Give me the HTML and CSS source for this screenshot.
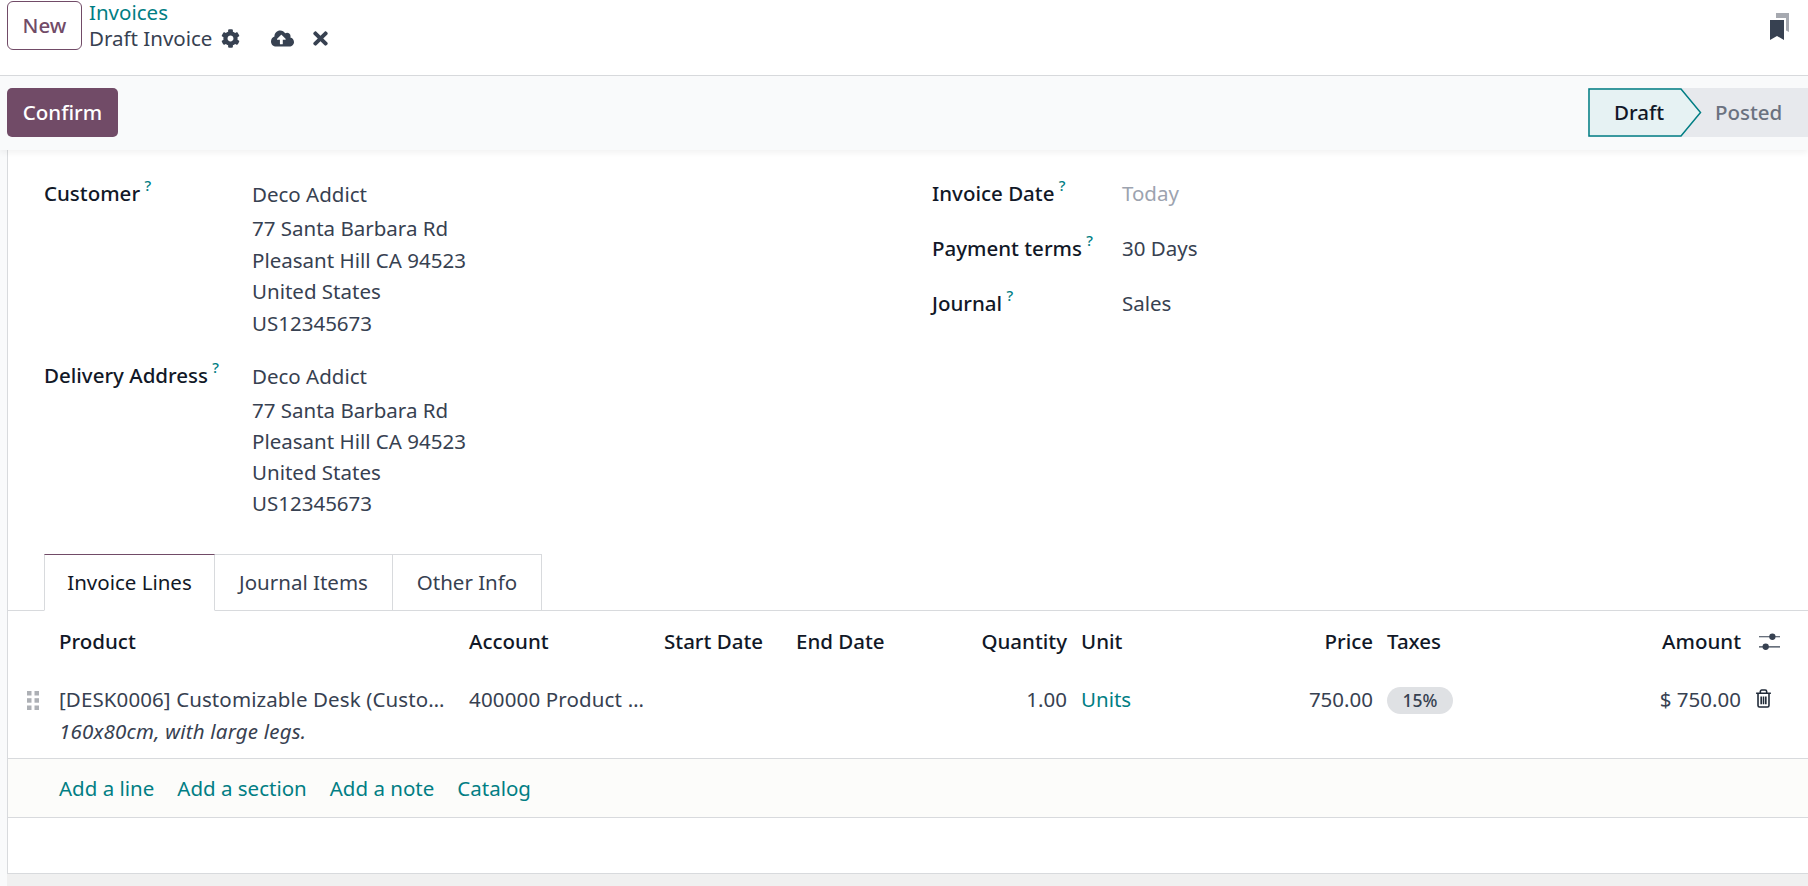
FILE: index.html
```html
<!DOCTYPE html>
<html lang="en">
<head>
<meta charset="utf-8">
<title>Draft Invoice</title>
<link rel="stylesheet" href="styles.css">
</head>
<body>
<header class="topbar">
  <button class="btn-new">New</button>
  <div class="crumbs">
    <a class="crumb-link">Invoices</a>
    <div class="crumb-current">
      <span class="crumb-title">Draft Invoice</span>
      <svg class="ic-gear" viewBox="0 0 512 512"><path d="M487.4 315.7l-42.6-24.6c4.3-23.2 4.3-47 0-70.2l42.6-24.6c4.9-2.8 7.1-8.6 5.5-14-11.1-35.6-30-67.8-54.7-94.6-3.8-4.1-10-5.1-14.8-2.3L380.8 110c-17.9-15.4-38.5-27.3-60.8-35.1V25.8c0-5.6-3.9-10.5-9.4-11.7-36.7-8.2-74.3-7.8-109.2 0-5.5 1.2-9.4 6.1-9.4 11.7V75c-22.2 7.9-42.8 19.8-60.8 35.1L88.7 85.5c-4.9-2.8-11-1.9-14.8 2.3-24.7 26.7-43.6 58.9-54.7 94.6-1.7 5.4.6 11.2 5.5 14L67.3 221c-4.3 23.2-4.3 47 0 70.2l-42.6 24.6c-4.9 2.8-7.1 8.6-5.5 14 11.1 35.6 30 67.8 54.7 94.6 3.8 4.1 10 5.1 14.8 2.3l42.6-24.6c17.9 15.4 38.5 27.3 60.8 35.1v49.2c0 5.6 3.9 10.5 9.4 11.7 36.7 8.2 74.3 7.8 109.2 0 5.5-1.2 9.4-6.1 9.4-11.7v-49.2c22.2-7.9 42.8-19.8 60.8-35.1l42.6 24.6c4.9 2.8 11 1.9 14.8-2.3 24.7-26.7 43.6-58.9 54.7-94.6 1.5-5.5-.7-11.3-5.6-14.1zM256 336c-44.1 0-80-35.9-80-80s35.9-80 80-80 80 35.9 80 80-35.9 80-80 80z"/></svg>
      <svg class="ic-cloud" viewBox="0 0 640 512"><path d="M537.6 226.6c4.1-10.7 6.4-22.4 6.4-34.6 0-53-43-96-96-96-19.7 0-38.1 6-53.3 16.2C367 64.2 315.3 32 256 32c-88.4 0-160 71.6-160 160 0 2.7.1 5.4.2 8.1C40.2 219.8 0 273.2 0 336c0 79.5 64.5 144 144 144h368c70.7 0 128-57.3 128-128 0-61.9-44-113.6-102.4-125.4zM393.4 288H328v112c0 8.8-7.2 16-16 16h-48c-8.8 0-16-7.2-16-16V288h-65.4c-14.3 0-21.4-17.2-11.3-27.3l105.4-105.4c6.2-6.2 16.4-6.2 22.6 0l105.4 105.4c10.1 10.1 2.9 27.3-11.3 27.3z"/></svg>
      <svg class="ic-times" viewBox="0 0 352 512"><path d="M242.72 256l100.07-100.07c12.28-12.28 12.28-32.19 0-44.48l-22.24-22.24c-12.28-12.28-32.19-12.28-44.48 0L176 189.28 75.93 89.21c-12.28-12.28-32.19-12.28-44.48 0L9.21 111.45c-12.28 12.28-12.28 32.19 0 44.48L109.28 256 9.21 356.07c-12.28 12.28-12.28 32.19 0 44.48l22.24 22.24c12.28 12.28 32.2 12.28 44.48 0L176 322.72l100.07 100.07c12.28 12.28 32.2 12.28 44.48 0l22.24-22.24c12.28-12.28 12.28-32.19 0-44.48L242.72 256z"/></svg>
    </div>
  </div>
  <svg class="ic-bookmarks" viewBox="0 0 19 27">
    <path class="bm-back" d="M6 0h13v19l-3-1.5V5H6z"/>
    <path class="bm-front" d="M0 7h14v20l-7-4-7 4z"/>
  </svg>
</header>

<section class="controlbar">
  <button class="btn-confirm">Confirm</button>
  <div class="statusbar">
    <div class="status-draft">
      <svg class="status-shape" viewBox="0 0 114 49"><polygon class="status-poly" points="1,1 93,1 112.5,24.5 93,48 1,48"/></svg>
      <span class="status-draft-text">Draft</span>
    </div>
    <span class="status-posted">Posted</span>
  </div>
</section>

<main class="page">
  <div class="sheet">
    <div class="form-groups">
      <div class="group group-left">
        <div class="field">
          <label class="field-label">Customer <sup class="help">?</sup></label>
          <div class="address">
            <div class="address-name">Deco Addict</div>
            <div>77 Santa Barbara Rd</div>
            <div>Pleasant Hill CA 94523</div>
            <div>United States</div>
            <div>US12345673</div>
          </div>
        </div>
        <div class="field field-delivery">
          <label class="field-label">Delivery Address <sup class="help">?</sup></label>
          <div class="address address-tight">
            <div class="address-name">Deco Addict</div>
            <div>77 Santa Barbara Rd</div>
            <div>Pleasant Hill CA 94523</div>
            <div>United States</div>
            <div>US12345673</div>
          </div>
        </div>
      </div>
      <div class="group group-right">
        <div class="field field-short">
          <label class="field-label field-label-right">Invoice Date <sup class="help">?</sup></label>
          <div class="placeholder">Today</div>
        </div>
        <div class="field field-short">
          <label class="field-label field-label-right">Payment terms <sup class="help">?</sup></label>
          <div>30 Days</div>
        </div>
        <div class="field field-short">
          <label class="field-label field-label-right">Journal <sup class="help">?</sup></label>
          <div>Sales</div>
        </div>
      </div>
    </div>

    <nav class="tabs">
      <a class="tab tab-active">Invoice Lines</a>
      <a class="tab tab-2">Journal Items</a>
      <a class="tab tab-3">Other Info</a>
    </nav>

    <table class="lines">
      <colgroup>
        <col class="c-handle"><col class="c-product"><col class="c-account"><col class="c-start"><col class="c-end"><col class="c-qty"><col class="c-unit"><col class="c-price"><col class="c-taxes"><col class="c-amount"><col class="c-opt">
      </colgroup>
      <thead>
        <tr>
          <th></th>
          <th>Product</th>
          <th>Account</th>
          <th>Start Date</th>
          <th>End Date</th>
          <th class="num">Quantity</th>
          <th>Unit</th>
          <th class="num">Price</th>
          <th>Taxes</th>
          <th class="num">Amount</th>
          <th class="opt-cell">
            <svg class="ic-sliders" viewBox="0 0 22 18">
              <path class="sl-line" d="M0 3.5h22M0 14h22"/>
              <circle class="sl-dot" cx="14" cy="3.5" r="3.3"/>
              <circle class="sl-dot" cx="7" cy="14" r="3.3"/>
            </svg>
          </th>
        </tr>
      </thead>
      <tbody>
        <tr class="row-line">
          <td class="handle-cell">
            <svg class="ic-handle" viewBox="0 0 12 19">
              <rect x="0" y="0" width="4.5" height="4.5"/><rect x="7.5" y="0" width="4.5" height="4.5"/>
              <rect x="0" y="7.2" width="4.5" height="4.5"/><rect x="7.5" y="7.2" width="4.5" height="4.5"/>
              <rect x="0" y="14.5" width="4.5" height="4.5"/><rect x="7.5" y="14.5" width="4.5" height="4.5"/>
            </svg>
          </td>
          <td class="product-cell">
            <div class="product-name">[DESK0006] Customizable Desk (Custo…</div>
            <div class="product-note">160x80cm, with large legs.</div>
          </td>
          <td><div class="account-name">400000 Product …</div></td>
          <td></td>
          <td></td>
          <td class="num">1.00</td>
          <td><a class="link">Units</a></td>
          <td class="num">750.00</td>
          <td><span class="badge">15%</span></td>
          <td class="num">$ 750.00</td>
          <td class="trash-cell">
            <svg class="ic-trash" viewBox="0 0 16 18">
              <path class="tr-stroke" d="M1 4h14M5 4V2.4C5 1.6 5.6 1 6.4 1h3.2c.8 0 1.4.6 1.4 1.4V4M2.8 4v11.6c0 .8.6 1.4 1.4 1.4h7.6c.8 0 1.4-.6 1.4-1.4V4M5.8 7v7.4M8 7v7.4M10.2 7v7.4"/>
            </svg>
          </td>
        </tr>
        <tr class="row-add">
          <td></td>
          <td colspan="10">
            <div class="add-links">
              <a class="link">Add a line</a>
              <a class="link">Add a section</a>
              <a class="link">Add a note</a>
              <a class="link">Catalog</a>
            </div>
          </td>
        </tr>
        <tr class="row-empty"><td colspan="11"></td></tr>
      </tbody>
    </table>
  </div>
</main>
</body>
</html>
```

FILE: styles.css
```css
* { box-sizing: border-box; }
html, body { height: 100%; }
body {
  margin: 0;
  height: 886px;
  overflow: hidden;
  display: flex;
  flex-direction: column;
  background: #fff;
  color: #374151;
  font-family: "Noto Sans", sans-serif;
  font-size: 20.5px;
  line-height: 31.5px;
}
button { font: inherit; cursor: pointer; }
a { color: #017e84; text-decoration: none; }

.topbar {
  height: 76px;
  flex: none;
  display: flex;
  align-items: flex-start;
  padding: 1px 0 0 7px;
  background: #fff;
  border-bottom: 1px solid #d8dadd;
}
.btn-new {
  width: 75px;
  height: 49px;
  padding: 0;
  background: #fff;
  border: 1px solid #714b67;
  border-radius: 6px;
  color: #714b67;
  font-weight: 500;
}
.crumbs { margin-left: 7px; display: flex; flex-direction: column; }
.crumb-link { height: 23px; line-height: 23px; }
.crumb-current { display: flex; align-items: center; height: 29px; }
.crumb-title { width: 128px; white-space: nowrap; }
.ic-gear { width: 19px; height: 19px; margin-left: 4px; fill: #374151; }
.ic-cloud { width: 23px; height: 19px; margin-left: 31px; fill: #374151; }
.ic-times { width: 15px; height: 21px; margin-left: 19px; fill: #374151; }
.ic-bookmarks { width: 19px; height: 27px; margin: 12px 19px 0 auto; }
.bm-back { fill: #a6a9b0; }
.bm-front { fill: #374151; }

.controlbar {
  height: 74px;
  flex: none;
  position: relative;
  z-index: 1;
  display: flex;
  justify-content: space-between;
  align-items: flex-start;
  padding: 12px 0 0 7px;
  background: #f9fafb;
  box-shadow: 0 3px 6px rgba(0, 0, 0, .05);
}
.btn-confirm {
  width: 111px;
  height: 49px;
  padding: 0;
  background: #714b67;
  border: 0;
  border-radius: 5px;
  color: #fff;
  font-weight: 500;
}
.statusbar {
  width: 220px;
  height: 49px;
  display: flex;
  align-items: center;
  background: #e7e9ed;
  font-weight: 500;
}
.status-draft {
  position: relative;
  width: 114px;
  height: 49px;
  display: flex;
  align-items: center;
  padding-left: 26px;
  color: #111827;
}
.status-shape { position: absolute; left: 0; top: 0; width: 114px; height: 49px; }
.status-poly { fill: #e6f2f3; stroke: #017e84; stroke-width: 1.5; }
.status-draft-text { position: relative; }
.status-posted { margin-left: 13px; color: #6b7280; }

.page {
  flex: 1;
  min-height: 0;
  padding-left: 7px;
  background: linear-gradient(#f9fafb, #f9fafb) left / 7px 100% no-repeat, #f0f0f0;
}
.sheet {
  height: 724px;
  background: #fff;
  border-left: 1px solid #d8dadd;
  border-bottom: 1px solid #d8dadd;
}

.form-groups { display: flex; height: 404px; padding: 28px 0 0 36px; }
.group-left { width: 888px; }
.field { display: flex; }
.field-label { width: 208px; color: #111827; font-weight: 500; }
.field-label-right { width: 190px; }
.field-delivery { margin-top: 21px; }
.field-short { height: 55px; }
.help { color: #017e84; font-size: 15px; font-weight: 500; line-height: 0; vertical-align: 10px; margin-left: -1px; }
.address-name { padding-top: 1px; margin-bottom: 2.5px; }
.address-tight { line-height: 31px; }
.placeholder { color: #9ca3af; }

.tabs { display: flex; height: 57px; padding-left: 36px; border-bottom: 1px solid #d8dadd; }
.tab {
  display: flex;
  align-items: center;
  justify-content: center;
  height: 57px;
  padding-top: 1px;
  color: #374151;
  border: 1px solid #d8dadd;
  border-left: 0;
  background: #fff;
}
.tab-active {
  width: 171px;
  color: #111827;
  border-left: 1px solid #d8dadd;
  border-top: 1px solid #714b67;
  border-bottom-color: #fff;
}
.tab-2 { width: 178px; }
.tab-3 { width: 149px; }

.lines { width: 1800px; table-layout: fixed; border-collapse: collapse; }
.c-handle { width: 44px; }
.c-product { width: 410px; }
.c-account { width: 195px; }
.c-start { width: 132px; }
.c-end { width: 130px; }
.c-qty { width: 155px; }
.c-unit { width: 176px; }
.c-price { width: 130px; }
.c-taxes { width: 220px; }
.c-amount { width: 148px; }
.c-opt { width: 60px; }
.lines th {
  height: 62px;
  padding: 0 7px;
  text-align: left;
  color: #111827;
  font-weight: 500;
  white-space: nowrap;
}
.lines td { padding: 0 7px; vertical-align: top; }
.lines .num { text-align: right; }
.row-line { border-bottom: 1px solid #d8dadd; }
.row-line td { height: 85px; padding-top: 11px; }
.lines .handle-cell { padding: 18px 0 0 19px; }
.ic-handle { display: block; width: 12px; height: 19px; fill: #adb0b5; }
.lines .product-cell { padding-right: 0; }
.product-name, .account-name { white-space: nowrap; }
.product-name { letter-spacing: .1px; }
.account-name { letter-spacing: .15px; }
.product-note { font-style: italic; letter-spacing: .2px; }
.badge {
  display: inline-flex;
  align-items: center;
  justify-content: center;
  width: 66px;
  height: 27px;
  margin-top: 3px;
  border-radius: 14px;
  background: #dfe1e4;
  font-size: 17.5px;
  font-weight: 500;
  line-height: 27px;
}
.lines .trash-cell { padding: 16px 0 0 7px; }
.ic-trash { display: block; width: 17px; height: 19px; }
.tr-stroke { fill: none; stroke: #1f2937; stroke-width: 1.5; }
.opt-cell { text-align: left; }
.ic-sliders { display: block; width: 21px; height: 18px; margin-left: 4px; }
.sl-line { stroke: #374151; stroke-width: 1.3; }
.sl-dot { fill: #374151; }
.row-add { background: #fcfcfa; border-bottom: 1px solid #d8dadd; }
.row-add td { height: 59px; vertical-align: middle; }
.add-links { display: flex; gap: 23px; padding-top: 2px; }
.link { white-space: nowrap; }
.row-empty td { height: 55px; }
```
